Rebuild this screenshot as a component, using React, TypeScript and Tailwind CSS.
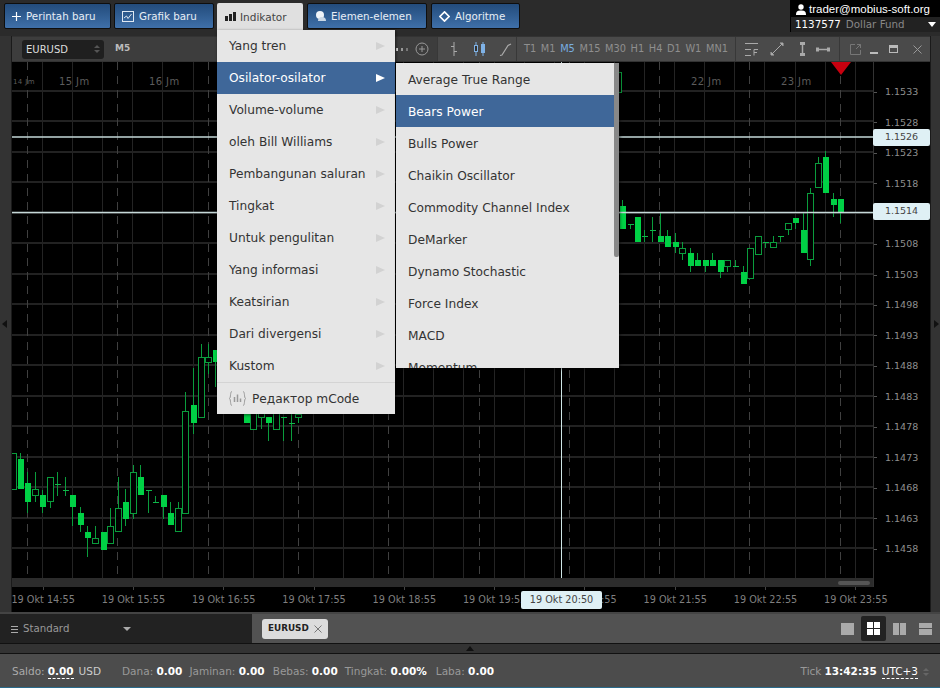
import type { ReactNode } from "react";

type Candle = [number, number, number, number, number, "f" | "h" | "d"];

// [x, bodyTop, bodyBottom, wickTop, wickBottom, kind], read off the chart at 3x
const LEFT: Candle[] = [
  [40, 340, 447, 340, 447, "h"],
  [60, 358, 448, 340, 448, "f"],
  [82, 430, 485, 395, 520, "f"],
  [104, 448, 465, 395, 487, "h"],
  [127, 465, 500, 450, 520, "f"],
  [150, 412, 483, 412, 503, "h"],
  [172, 432, 432, 395, 467, "d"],
  [195, 450, 450, 412, 467, "d"],
  [217, 465, 500, 465, 557, "f"],
  [240, 520, 555, 500, 575, "f"],
  [262, 575, 593, 557, 650, "f"],
  [285, 593, 610, 557, 610, "h"],
  [308, 575, 630, 575, 630, "f"],
  [330, 557, 610, 503, 610, "h"],
  [353, 503, 573, 412, 575, "h"],
  [375, 485, 538, 448, 557, "f"],
  [398, 395, 518, 375, 537, "h"],
  [420, 412, 466, 375, 466, "f"],
  [443, 450, 450, 450, 520, "d"],
  [465, 485, 485, 467, 485, "d"],
  [488, 466, 500, 466, 537, "f"],
  [511, 520, 555, 485, 555, "f"],
  [533, 503, 574, 485, 574, "h"],
  [556, 212, 520, 157, 520, "h"],
  [579, 195, 248, 85, 283, "f"],
  [602, 50, 230, 13, 230, "h"],
  [624, 50, 67, 13, 103, "h"],
  [646, 30, 65, 30, 140, "f"],
  [738, 210, 248, 210, 248, "f"],
  [760, 220, 267, 220, 267, "h"],
  [783, 220, 230, 210, 267, "h"],
  [805, 232, 248, 232, 302, "f"],
  [828, 215, 267, 215, 267, "h"],
  [850, 232, 232, 232, 302, "d"],
  [873, 250, 250, 220, 302, "d"],
  [895, 222, 232, 210, 248, "h"],
];

const RIGHT: Candle[] = [
  [-6, -144, -84, -144, -84, "h"],
  [6, 257, 328, 240, 328, "f"],
  [29, 312, 312, 312, 328, "d"],
  [52, 292, 365, 292, 365, "f"],
  [73, 348, 348, 330, 365, "d"],
  [96, 330, 330, 292, 365, "d"],
  [119, 347, 365, 275, 365, "f"],
  [142, 347, 382, 330, 382, "f"],
  [164, 365, 382, 338, 400, "f"],
  [187, 385, 400, 365, 420, "h"],
  [210, 400, 437, 385, 455, "f"],
  [232, 420, 437, 400, 437, "f"],
  [254, 420, 437, 420, 455, "f"],
  [277, 420, 437, 400, 437, "f"],
  [300, 420, 455, 420, 475, "f"],
  [322, 420, 437, 420, 455, "h"],
  [345, 438, 438, 420, 438, "d"],
  [368, 456, 491, 437, 491, "f"],
  [390, 383, 475, 383, 475, "h"],
  [413, 347, 401, 347, 401, "h"],
  [435, 367, 367, 367, 383, "d"],
  [458, 365, 382, 347, 383, "h"],
  [481, 348, 348, 348, 365, "d"],
  [503, 310, 328, 310, 345, "h"],
  [526, 293, 310, 293, 328, "f"],
  [548, 330, 400, 275, 400, "f"],
  [571, 220, 418, 203, 437, "h"],
  [594, 130, 202, 112, 202, "h"],
  [616, 112, 220, 93, 220, "f"],
  [639, 238, 256, 220, 292, "f"],
  [661, 238, 275, 238, 310, "f"],
];

const PRICES = [
  "1.1533", "1.1528", "1.1523", "1.1518", "1.1513", "1.1508", "1.1503", "1.1498",
  "1.1493", "1.1488", "1.1483", "1.1478", "1.1473", "1.1468", "1.1463", "1.1458",
];
const TIMES = ["14:55", "15:55", "16:55", "17:55", "18:55", "19:55", "20:55", "21:55", "22:55", "23:55"];
const FRAMES = ["T1", "M1", "M5", "M15", "M30", "H1", "H4", "D1", "W1", "MN1"];
const MENU = [
  "Yang tren", "Osilator-osilator", "Volume-volume", "oleh Bill Williams", "Pembangunan saluran",
  "Tingkat", "Untuk pengulitan", "Yang informasi", "Keatsirian", "Dari divergensi", "Kustom",
];
const SUBMENU = [
  "Average True Range", "Bears Power", "Bulls Power", "Chaikin Oscillator", "Commodity Channel Index",
  "DeMarker", "Dynamo Stochastic", "Force Index", "MACD", "Momentum",
];

function CandleMark({ c, ox, oy }: { c: Candle; ox: number; oy: number }) {
  const x = Math.round(ox + c[0] / 3);
  const top = Math.round(oy + c[1] / 3);
  const bottom = Math.round(oy + c[2] / 3);
  const wt = Math.round(oy + c[3] / 3);
  const wb = Math.round(oy + c[4] / 3);
  return (
    <g>
      <rect x={x} y={wt} width={1} height={wb - wt} fill="#0a9c3c" />
      {c[5] === "f" && <rect x={x - 2} y={top} width={6} height={bottom - top} fill="#00d145" />}
      {c[5] === "h" && (
        <rect x={x - 2.5} y={top + 0.5} width={6} height={bottom - top} fill="#000" stroke="#0a9c3c" />
      )}
      {c[5] === "d" && <rect x={x - 2} y={top} width={6} height={1} fill="#0fb849" />}
    </g>
  );
}

function Chart() {
  const solid = Array.from({ length: 28 }, (_, i) => Math.round(42 + i * 30.1) + 0.5);
  const dashed = Array.from({ length: 10 }, (_, i) => Math.round(27 + i * 90.3) + 0.5);
  const rows = Array.from({ length: 16 }, (_, i) => Math.round(91 + i * 30.47));
  return (
    <svg viewBox="12 62 861 516" className="block h-[516px] w-[861px]" shapeRendering="crispEdges">
      <rect x="12" y="62" width="861" height="516" fill="#000" />
      {solid.map((x) => (
        <line key={x} x1={x} x2={x} y1="62" y2="578" stroke="#242424" />
      ))}
      {rows.map((y) => (
        <line key={y} x1="12" x2="873" y1={y} y2={y} stroke="#222" strokeWidth="2" />
      ))}
      {dashed.map((x) => (
        <line key={x} x1={x} x2={x} y1="62" y2="578" stroke="#404040" strokeDasharray="8 6" />
      ))}
      {LEFT.map((c) => (
        <CandleMark key={c[0]} c={c} ox={0} oy={340} />
      ))}
      {RIGHT.map((c) => (
        <CandleMark key={c[0]} c={c} ox={620} oy={120} />
      ))}
      <g shapeRendering="auto" stroke="#c5d8d8" strokeWidth="1.5">
        <line x1="12" x2="873" y1="137" y2="137" />
        <line x1="12" x2="873" y1="212.500" y2="212.500" />
      </g>
      <line x1="561.5" x2="561.5" y1="62" y2="578" stroke="#cfe6e6" />
      <polygon points="831,62 851,62 841,75" fill="#c8000f" shapeRendering="auto" />
      <g fill="#5c5c5c" fontSize="10" letterSpacing="0.4" shapeRendering="auto">
        <text x="13" y="84" fontSize="7">14 Jm</text>
        <text x="59" y="85">15 Jm</text>
        <text x="149" y="85">16 Jm</text>
        <text x="691" y="85">22 Jm</text>
        <text x="781" y="85">23 Jm</text>
      </g>
    </svg>
  );
}

function TopButton({ icon, label, width }: { icon: ReactNode; label: string; width: string }) {
  return (
    <div
      className={`flex h-[26px] items-center gap-[5px] rounded-[2px] border border-[#0e0e0e] bg-gradient-to-b from-[#234c7c] to-[#3f70a9] pl-[7px] text-[10.3px] text-[#e8eef5] ${width}`}
    >
      {icon}
      <span className="pt-[2px]">{label}</span>
    </div>
  );
}

function Arrow({ on }: { on: boolean }) {
  return (
    <svg width="9" height="8" viewBox="0 0 9 8">
      <polygon points="0,0 9,4 0,8" fill={on ? "#fff" : "#d2d2d2"} />
    </svg>
  );
}

function Toolbar() {
  return (
    <div className="flex h-[26px] items-center border-y border-[#333] bg-[#4a4a4a] text-[11px] text-[#8f8f8f]">
      <div className="flex h-full w-[426px] shrink-0 items-center border-r border-[#383838] bg-[#3d3d3d]">
        <div className="ml-[10px] flex h-[19px] w-[82px] items-center justify-between rounded-[3px] bg-[#1f1f1f] pl-1 pr-1 text-[10px] text-[#ddd]">
          EURUSD
          <span className="flex flex-col gap-[2px]">
            <span className="h-0 w-0 border-x-[3px] border-b-[3px] border-x-transparent border-b-[#555]" />
            <span className="h-0 w-0 border-x-[3px] border-t-[3px] border-x-transparent border-t-[#555]" />
          </span>
        </div>
        <span className="ml-[11px] text-[9px] font-bold text-[#bbb]">M5</span>
        <span className="ml-auto mr-[8px] flex items-center gap-[3px]">
          <span className="h-[3px] w-[2px] bg-[#ddd]" />
          <span className="h-[3px] w-[2px] bg-[#999]" />
          <span className="mr-[4px] h-[3px] w-[2px] bg-[#777]" />
          <svg width="14" height="14" viewBox="0 0 14 14" fill="none" stroke="#999">
            <circle cx="7" cy="7" r="6" />
            <path d="M7 4v6M4 7h6" />
          </svg>
        </span>
      </div>
      <div className="flex h-full w-[79px] shrink-0 items-center gap-[13px] border-r border-[#383838] pl-[10px]">
        <svg width="12" height="14" viewBox="0 0 12 14" fill="none" stroke="#aaa">
          <path d="M6 0v14M3 4.500h3M6 9.500h3" />
        </svg>
        <svg width="13" height="14" viewBox="0 0 13 14" fill="#7fb2e6" stroke="#7fb2e6">
          <path d="M3 0v14M10 0v14" />
          <rect x="1.500" y="3.500" width="3" height="6" fill="#333" />
          <rect x="8.500" y="2.500" width="3" height="8" />
        </svg>
        <svg width="13" height="13" viewBox="0 0 13 13" fill="none" stroke="#aaa" strokeWidth="1.200">
          <path d="M1 12.500 3 12 9 2.500l3-1.500" />
        </svg>
      </div>
      <div className="flex h-full w-[219px] shrink-0 items-center justify-between border-r border-[#383838] px-[7px] text-[9.800px]">
        {FRAMES.map((f) => (
          <span key={f} className={f === "M5" ? "text-[#78aee0]" : ""}>
            {f}
          </span>
        ))}
      </div>
      <div className="flex h-full w-[104px] shrink-0 items-center gap-[11px] border-r border-[#383838] pl-[9px]">
        <svg width="14" height="13" viewBox="0 0 14 13" fill="none" stroke="#aaa">
          <path d="M0 .500h13M0 6.500h6M0 12.500h6M9 12.500V6.500h4M9 9.500h3" />
        </svg>
        <svg width="14" height="14" viewBox="0 0 14 14" fill="none" stroke="#aaa">
          <path d="M2 12 12 2" />
          <path d="M10 1h3v3M1 10v3h3" fill="#aaa" />
        </svg>
        <svg className="ml-[4px]" width="7" height="14" viewBox="0 0 7 14" fill="#aaa" stroke="#aaa">
          <path d="M3.500 2v10" strokeWidth="1.500" />
          <rect x="1.500" y=".5" width="4" height="2" />
          <rect x="1.500" y="11.500" width="4" height="2" />
        </svg>
        <svg className="-ml-[1px]" width="14" height="7" viewBox="0 0 14 7" fill="#aaa" stroke="#aaa">
          <path d="M2 3.500h10" strokeWidth="1.500" />
          <rect x=".5" y="2" width="2" height="3" />
          <rect x="11.500" y="2" width="2" height="3" />
        </svg>
      </div>
      <div className="flex flex-1 items-center gap-[9px] pl-[10px]">
        <svg width="11" height="11" viewBox="0 0 11 11" fill="none" stroke="#777">
          <path d="M5 .500H.500v10h10V6M6 5l4.500-4.500M7 .500h3.500V4" />
        </svg>
        <span className="mt-[7px] h-[2px] w-[8px] bg-[#bbb]" />
        <span className="ml-[2px] h-[8px] w-[9px] border border-t-[3px] border-[#bbb]" />
        <svg className="ml-[6px]" width="9" height="9" viewBox="0 0 9 9" stroke="#999" fill="none">
          <path d="m.500.500 8 8M8.500.500l-8 8" />
        </svg>
      </div>
    </div>
  );
}

function LayoutIcon({ children, active }: { children: ReactNode; active?: boolean }) {
  return (
    <div
      className={`flex h-[25px] w-[25px] items-center justify-center rounded-[2px] ${active ? "bg-[#222]" : ""}`}
    >
      {children}
    </div>
  );
}

function Stat({ name, value, className }: { name: string; value: string; className?: string }) {
  return (
    <span className={className}>
      <span className="text-[#999]">{name}: </span>
      <span className="font-bold text-white">{value}</span>
    </span>
  );
}

export default function App() {
  return (
    <div className="relative flex h-[688px] w-[940px] flex-col overflow-hidden bg-[#2a2a2a] font-['DejaVu_Sans',sans-serif]">
      {/* top bar */}
      <div className="flex h-[36px] shrink-0 bg-[#2b2b2b]">
        <div className="flex flex-1 items-start gap-[3px] pl-[4px] pt-[3px]">
          <TopButton
            label="Perintah baru"
            width="w-[107px]"
            icon={
              <svg width="9" height="9" viewBox="0 0 10 10" stroke="#fff" strokeWidth="1.300">
                <path d="M5 0v10M0 5h10" />
              </svg>
            }
          />
          <TopButton
            label="Grafik baru"
            width="w-[100px]"
            icon={
              <svg width="12" height="11" viewBox="0 0 12 11" fill="none" stroke="#dfe8f2">
                <rect x=".5" y=".5" width="11" height="10" />
                <path d="M2 7l2.500-2L6 7.500 9.500 3" />
              </svg>
            }
          />
          <div className="flex h-[27px] w-[86px] items-center gap-[4px] rounded-t-[2px] bg-[#e0e0e0] pl-[8px] text-[10.500px] text-[#444]">
            <svg width="11" height="9" viewBox="0 0 11 9" fill="#222">
              <rect x="0" y="4" width="3" height="5" />
              <rect x="4" y="2" width="3" height="7" />
              <rect x="8" y="0" width="3" height="9" />
            </svg>
            <span className="pt-[2px]">Indikator</span>
          </div>
          <TopButton
            label="Elemen-elemen"
            width="ml-px w-[120px]"
            icon={
              <svg width="11" height="11" viewBox="0 0 11 11" fill="#eef3f8">
                <circle cx="5" cy="4" r="4" />
                <path d="M3 10a3 3 0 0 1 8 0z" fill="#cbd8e6" />
              </svg>
            }
          />
          <TopButton
            label="Algoritme"
            width="ml-px w-[89px]"
            icon={
              <svg width="11" height="11" viewBox="0 0 12 12" fill="none" stroke="#fff" strokeWidth="1.800">
                <path d="M6 1 11 6 6 11 1 6z" />
              </svg>
            }
          />
        </div>
        <div className="h-[32px] w-[150px] bg-black pl-[1px] text-[11px] leading-[15px]">
          <div className="flex h-[17px] items-center gap-[3px] pl-[5px] pt-[1px] font-['Liberation_Sans',sans-serif] text-[11.500px] text-white">
            <svg width="10" height="11" viewBox="0 0 10 11" fill="#fff">
              <circle cx="5" cy="3" r="2.700" />
              <path d="M0 11c0-4 2-4.500 5-4.500s5 .5 5 4.500z" />
            </svg>
            trader@mobius-soft.org
          </div>
          <div className="flex h-[15px] items-center bg-[#222] pl-[4px] pr-[4px] text-[10.300px] text-[#888]">
            <span className="mr-[5px] text-white">1137577</span>
            Dollar Fund
            <span className="ml-auto h-0 w-0 border-x-[4px] border-t-[5px] border-x-transparent border-t-white" />
          </div>
        </div>
      </div>

      {/* workspace */}
      <div className="flex h-[576px] shrink-0">
        <div className="flex w-[12px] shrink-0 items-center border-r border-[#1a1a1a] bg-[#333] pl-[2px]">
          <span className="h-0 w-0 border-y-[4px] border-r-[5px] border-y-transparent border-r-[#111]" />
        </div>
        <div className="flex w-[918px] shrink-0 flex-col">
          <Toolbar />
          <div className="flex h-[525px]">
            <div className="w-[861px] shrink-0">
              <Chart />
              <div className="flex h-[9px] items-center justify-end bg-[#2c2c2c] pr-[3px]">
                <span className="h-[4px] w-[32px] rounded-[2px] bg-[#555]" />
              </div>
            </div>
            <div className="flex-1 border-l border-[#333] bg-black pt-[15px] text-[9.500px] text-[#8f8f8f]">
              {PRICES.map((p) => (
                <div key={p} className="flex h-[30.47px] items-center">
                  <span className="mr-[8px] h-px w-[3px] bg-[#555]" />
                  {p}
                </div>
              ))}
            </div>
          </div>
          <div className="relative h-[25px] overflow-hidden bg-black text-[9.700px] text-[#7f7f7f]">
            <div className="-ml-[14px] flex">
              {TIMES.map((t) => (
                <div key={t} className="flex w-[90.3px] shrink-0 flex-col items-center">
                  <span className="h-[3px] w-px bg-[#444]" />
                  <span className="mt-[3px] whitespace-nowrap">19 Okt {t}</span>
                </div>
              ))}
            </div>
            <div className="absolute left-[509px] top-[4px] flex h-[18px] w-[81px] items-center justify-center rounded-[2px] bg-[#dff0f5] text-[#444]">
              19 Okt 20:50
            </div>
          </div>
        </div>
        <div className="flex w-[10px] shrink-0 items-center justify-end border-l border-[#1a1a1a] bg-[#333] pr-[1px]">
          <span className="h-0 w-0 border-y-[4px] border-l-[5px] border-y-transparent border-l-[#111]" />
        </div>
      </div>

      {/* tabs */}
      <div className="flex h-[31px] shrink-0 border-t-2 border-[#444]">
        <div className="flex w-[252px] shrink-0 items-center bg-[#222] pl-[11px] pt-[1px] text-[10.200px] text-[#999]">
          <span className="mr-[5px] flex flex-col gap-[2px]">
            <span className="h-px w-[7px] bg-[#aaa]" />
            <span className="h-px w-[7px] bg-[#aaa]" />
            <span className="h-px w-[7px] bg-[#aaa]" />
          </span>
          Standard
          <span className="ml-[54px] h-0 w-0 border-x-[4px] border-t-[4px] border-x-transparent border-t-[#aaa]" />
        </div>
        <div className="flex flex-1 items-center bg-[#525252] pl-[10px]">
          <div className="flex h-[20px] w-[66px] items-center justify-between rounded-[3px] bg-[#dcdcdc] px-[6px] text-[8.800px] font-bold text-[#222]">
            EURUSD
            <svg width="8" height="8" viewBox="0 0 8 8" stroke="#777" fill="none">
              <path d="m.5.5 7 7M7.500.5l-7 7" />
            </svg>
          </div>
          <div className="ml-auto mr-[2px] flex items-center gap-px">
            <LayoutIcon>
              <span className="h-[12px] w-[13px] bg-[#aaa]" />
            </LayoutIcon>
            <LayoutIcon active>
              <span className="grid grid-cols-2 gap-px">
                <span className="h-[6px] w-[6px] bg-white" />
                <span className="h-[6px] w-[6px] bg-white" />
                <span className="h-[6px] w-[6px] bg-white" />
                <span className="h-[6px] w-[6px] bg-white" />
              </span>
            </LayoutIcon>
            <LayoutIcon>
              <span className="flex gap-px">
                <span className="h-[12px] w-[6px] bg-[#aaa]" />
                <span className="h-[12px] w-[6px] bg-[#aaa]" />
              </span>
            </LayoutIcon>
            <LayoutIcon>
              <span className="flex flex-col gap-px">
                <span className="h-[5px] w-[13px] bg-[#aaa]" />
                <span className="h-[6px] w-[13px] bg-[#aaa]" />
              </span>
            </LayoutIcon>
          </div>
        </div>
      </div>

      {/* divider */}
      <div className="flex h-[11px] shrink-0 items-center justify-center border-y border-[#111] bg-[#333]">
        <span className="h-0 w-0 border-x-[4px] border-b-[5px] border-x-transparent border-b-[#111]" />
      </div>

      {/* status bar */}
      <div className="flex h-[34px] shrink-0 items-center border-b border-[#2a6a8a] bg-[#4c4c4c] pl-[12px] pr-[11px] pt-[3px] text-[10.500px]">
        <span className="text-[#aaa]">Saldo: </span>
        <span className="ml-[3px] border-b border-dashed border-white font-bold leading-[13px] text-white">0.00</span>
        <span className="ml-[5px] text-[#ccc]">USD</span>
        <Stat className="ml-[21px]" name="Dana" value="0.00" />
        <Stat className="ml-[7px]" name="Jaminan" value="0.00" />
        <Stat className="ml-[8px]" name="Bebas" value="0.00" />
        <Stat className="ml-[7px]" name="Tingkat" value="0.00%" />
        <Stat className="ml-[9px]" name="Laba" value="0.00" />
        <span className="ml-auto text-[#999]">Tick</span>
        <span className="ml-[3px] font-bold text-white">13:42:35</span>
        <span className="ml-[5px] border-b border-dashed border-white leading-[13px] text-white">UTC+3</span>
        <span className="ml-[5px] flex flex-col gap-[2px]">
          <span className="h-0 w-0 border-x-[3px] border-b-[3px] border-x-transparent border-b-[#666]" />
          <span className="h-0 w-0 border-x-[3px] border-t-[3px] border-x-transparent border-t-[#666]" />
        </span>
      </div>

      {/* price tags sit over the axis */}
      <div className="absolute left-[873px] top-[129px] flex h-[17px] w-[57px] items-center justify-center rounded-[2px] bg-[#dff0f5] text-[9.500px] text-[#444]">
        1.1526
      </div>
      <div className="absolute left-[873px] top-[203px] flex h-[17px] w-[57px] items-center justify-center rounded-[2px] bg-[#dff0f5] text-[9.500px] text-[#444]">
        1.1514
      </div>

      {/* indicator dropdown */}
      <div className="absolute left-[217px] top-[30px] w-[178px] bg-[#e6e6e6] text-[12.200px] text-[#333] shadow-[1px_1px_3px_rgba(0,0,0,0.6)]">
        {MENU.map((m) => {
          const on = m === "Osilator-osilator";
          return (
            <div
              key={m}
              className={`flex h-[32px] items-center justify-between pl-[12px] pr-[10px] ${on ? "bg-[#3f6799] text-white" : ""}`}
            >
              <span className="pt-[1px]">{m}</span>
              <Arrow on={on} />
            </div>
          );
        })}
        <div className="flex h-[32px] items-center gap-[6px] border-t border-[#d4d4d4] pl-[12px]">
          <svg width="17" height="15" viewBox="0 0 17 15" fill="none" stroke="#999">
            <path d="M3 .5c-2 0-1 6-2.500 7C2 8.500 1 14.500 3 14.500M14 .5c2 0 1 6 2.500 7-1.500 1-.5 7-2.500 7" />
            <path d="M5.500 6v5M8.500 3.500V11M11.500 7.500V11" strokeWidth="1.500" />
          </svg>
          <span className="pt-[1px]">Редактор mCode</span>
        </div>
      </div>

      {/* oscillators submenu */}
      <div className="absolute left-[396px] top-[63px] flex h-[305px] w-[223px] overflow-hidden bg-[#e6e6e6] text-[12.200px] text-[#333] shadow-[1px_1px_3px_rgba(0,0,0,0.6)]">
        <div className="flex-1">
          {SUBMENU.map((s) => (
            <div
              key={s}
              className={`flex h-[32px] items-center pl-[12px] ${s === "Bears Power" ? "bg-[#3f6799] text-white" : ""}`}
            >
              <span className="pt-[3px]">{s}</span>
            </div>
          ))}
        </div>
        <div className="h-[194px] w-[5px] rounded-b-[2px] bg-[#888]" />
      </div>
    </div>
  );
}
